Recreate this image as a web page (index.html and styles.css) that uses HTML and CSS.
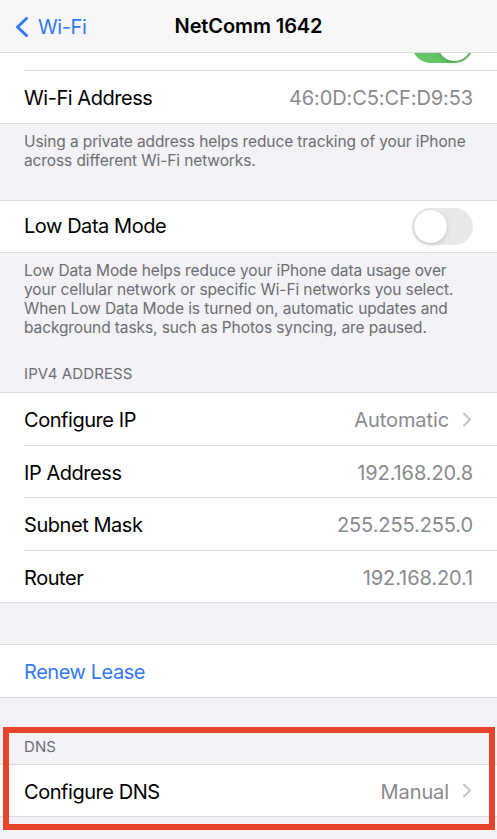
FILE: index.html
```html
<!DOCTYPE html>
<html lang="en">
<head>
<meta charset="utf-8">
<title>NetComm 1642</title>
<link rel="stylesheet" href="styles.css">
</head>
<body>
<header class="nav">
  <div class="back">
    <svg class="back-chev" width="16" height="20" viewBox="0 0 16 20"><path d="M12.5 1.5 L3.5 10 L12.5 18.5" fill="none" stroke="#3478f6" stroke-width="3" stroke-linecap="round" stroke-linejoin="round"/></svg>
    <span>Wi-Fi</span>
  </div>
  <div class="title">NetComm 1642</div>
  <div></div>
</header>

<section class="group group-first">
  <div class="row row-partial"><span class="toggle on"><span class="knob"></span></span></div>
  <div class="row"><span class="label">Wi-Fi Address</span><span class="value">46:0D:C5:CF:D9:53</span></div>
</section>
<p class="footer footer-1">Using a private address helps reduce tracking of your iPhone across different Wi-Fi networks.</p>

<section class="group">
  <div class="row row-toggle"><span class="label">Low Data Mode</span><span class="toggle off"><span class="knob"></span></span></div>
</section>
<p class="footer">Low Data Mode helps reduce your iPhone data usage over your cellular network or specific Wi-Fi networks you select. When Low Data Mode is turned on, automatic updates and background tasks, such as Photos syncing, are paused.</p>

<h2 class="header header-ipv4">IPV4 ADDRESS</h2>
<section class="group">
  <div class="row"><span class="label">Configure IP</span><span class="value">Automatic<svg class="chev" width="10" height="15" viewBox="0 0 10 15"><path d="M2 1.5 L8 7.5 L2 13.5" fill="none" stroke="#c4c4c7" stroke-width="2" stroke-linecap="round" stroke-linejoin="round"/></svg></span></div>
  <div class="row"><span class="label">IP Address</span><span class="value">192.168.20.8</span></div>
  <div class="row"><span class="label">Subnet Mask</span><span class="value">255.255.255.0</span></div>
  <div class="row"><span class="label">Router</span><span class="value">192.168.20.1</span></div>
</section>

<section class="group group-renew">
  <div class="row"><span class="label link">Renew Lease</span></div>
</section>

<h2 class="header header-dns">DNS</h2>
<section class="group">
  <div class="row"><span class="label">Configure DNS</span><span class="value">Manual<svg class="chev" width="10" height="15" viewBox="0 0 10 15"><path d="M2 1.5 L8 7.5 L2 13.5" fill="none" stroke="#c4c4c7" stroke-width="2" stroke-linecap="round" stroke-linejoin="round"/></svg></span></div>
</section>

<div class="highlight"></div>
</body>
</html>
```

FILE: styles.css
```css
* { box-sizing: border-box; }
html, body { margin: 0; padding: 0; }
body {
  background: #f2f2f7;
  font-family: Inter, "Liberation Sans", Arial, sans-serif;
  color: #000;
  width: 497px;
  height: 839px;
  overflow: hidden;
}

.nav {
  height: 53px;
  background: #f7f7f7;
  border-bottom: 1px solid #d9d9d9;
  display: grid;
  grid-template-columns: 1fr auto 1fr;
  align-items: center;
}
.back {
  display: flex;
  align-items: center;
  gap: 8px;
  padding-left: 14px;
  color: #3478f6;
  font-size: 20px;
  letter-spacing: -0.4px;
  margin-top: 1px;
}
.back-chev { display: block; }
.title {
  font-size: 20px;
  font-weight: 600;
  letter-spacing: -0.1px;
}

.group {
  background: #fff;
  border-top: 1px solid #dcdcdf;
  border-bottom: 1px solid #dcdcdf;
}
.group-first { border-top: 0; }

.row {
  height: 52.5px;
  margin-left: 24px;
  padding-right: 24px;
  padding-top: 3px;
  border-top: 1px solid #dcdcdf;
  display: flex;
  align-items: center;
  justify-content: space-between;
  font-size: 20px;
  letter-spacing: -0.45px;
}
.row:first-child { border-top: 0; height: 51.5px; }
.row-toggle { padding-top: 0; }
.row-partial {
  height: 17px !important;
  padding-top: 0;
  overflow: hidden;
  align-items: flex-end;
  justify-content: flex-end;
}
.row-partial .toggle { margin-bottom: 7px; flex: none; }

.value {
  color: #8a8a8e;
  display: flex;
  align-items: center;
  letter-spacing: -0.1px;
}
.chev { margin-left: 13px; margin-right: 1px; margin-top: -2px; display: block; }
.link { color: #3478f6; }

.toggle {
  width: 61px;
  height: 37px;
  border-radius: 19px;
  background: #e9e9eb;
  position: relative;
  display: block;
  flex: none;
}
.toggle.on { background: #65c466; }
.knob {
  position: absolute;
  top: 2px;
  width: 33px;
  height: 33px;
  border-radius: 50%;
  background: #fff;
  box-shadow: 0 2px 5px rgba(0,0,0,0.15), 0 0 1px rgba(0,0,0,0.12);
}
.toggle.off .knob { left: 2px; }
.toggle.on .knob { right: 2px; }

.footer {
  margin: 0;
  padding: 8px 24px 0;
  font-size: 15.5px;
  line-height: 19px;
  color: #6d6d72;
  letter-spacing: -0.1px;
}
.footer-1 { padding-bottom: 30px; }

.header {
  margin: 0;
  font-weight: 400;
  font-size: 15px;
  line-height: 18px;
  color: #6d6d72;
  padding: 0 24px 9px;
  letter-spacing: 0.1px;
}
.header-ipv4 { padding-top: 28px; }
.group-renew { margin-top: 41px; }
.header-dns { padding-top: 40px; padding-bottom: 8px; }

.highlight {
  position: absolute;
  left: 3px;
  top: 727px;
  width: 492px;
  height: 103px;
  border: 6px solid #e8442c;
  pointer-events: none;
}
```
